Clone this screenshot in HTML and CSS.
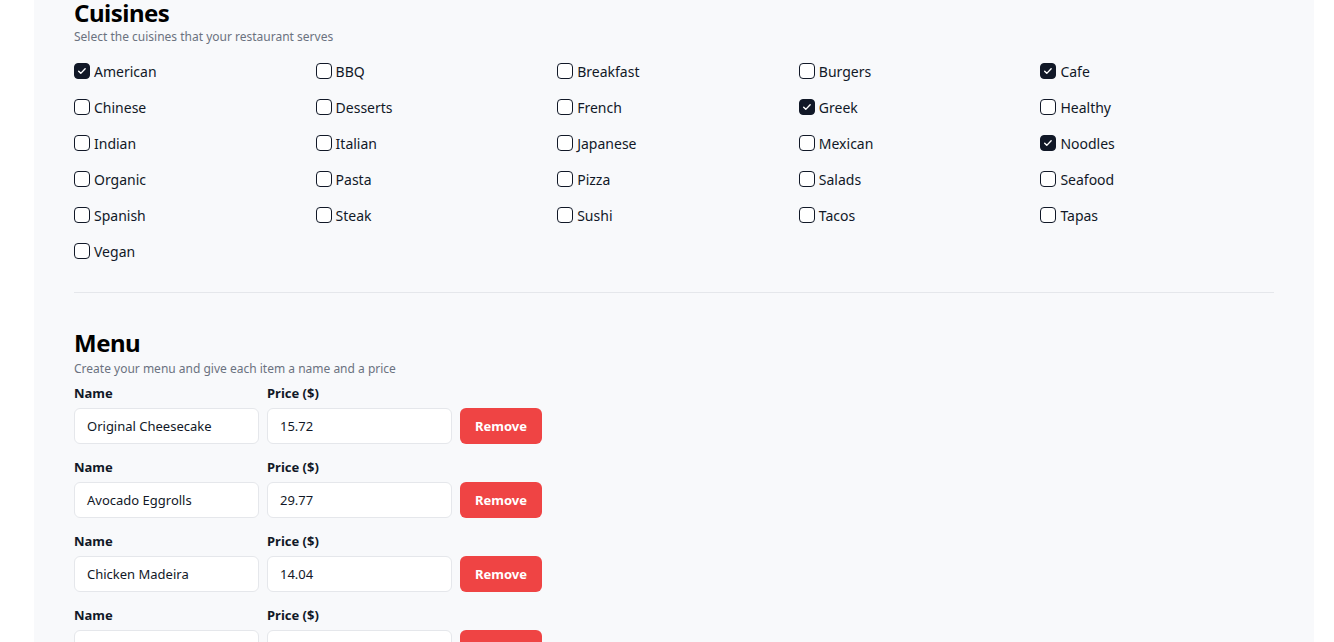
FILE: index.html
```html
<!DOCTYPE html>
<html lang="en">
<head>
<meta charset="utf-8">
<title>Restaurant settings</title>
<link rel="stylesheet" href="styles.css">
</head>
<body>
<main class="panel">
  <section class="section">
    <h2 class="section-title">Cuisines</h2>
    <p class="section-sub">Select the cuisines that your restaurant serves</p>
    <div class="cuisine-grid">
      <label class="check"><span class="box checked"><svg viewBox="0 0 16 16"><path d="M4.2 8.3l2.4 2.4 5-5.2"/></svg></span>American</label>
      <label class="check"><span class="box"></span>BBQ</label>
      <label class="check"><span class="box"></span>Breakfast</label>
      <label class="check"><span class="box"></span>Burgers</label>
      <label class="check"><span class="box checked"><svg viewBox="0 0 16 16"><path d="M4.2 8.3l2.4 2.4 5-5.2"/></svg></span>Cafe</label>
      <label class="check"><span class="box"></span>Chinese</label>
      <label class="check"><span class="box"></span>Desserts</label>
      <label class="check"><span class="box"></span>French</label>
      <label class="check"><span class="box checked"><svg viewBox="0 0 16 16"><path d="M4.2 8.3l2.4 2.4 5-5.2"/></svg></span>Greek</label>
      <label class="check"><span class="box"></span>Healthy</label>
      <label class="check"><span class="box"></span>Indian</label>
      <label class="check"><span class="box"></span>Italian</label>
      <label class="check"><span class="box"></span>Japanese</label>
      <label class="check"><span class="box"></span>Mexican</label>
      <label class="check"><span class="box checked"><svg viewBox="0 0 16 16"><path d="M4.2 8.3l2.4 2.4 5-5.2"/></svg></span>Noodles</label>
      <label class="check"><span class="box"></span>Organic</label>
      <label class="check"><span class="box"></span>Pasta</label>
      <label class="check"><span class="box"></span>Pizza</label>
      <label class="check"><span class="box"></span>Salads</label>
      <label class="check"><span class="box"></span>Seafood</label>
      <label class="check"><span class="box"></span>Spanish</label>
      <label class="check"><span class="box"></span>Steak</label>
      <label class="check"><span class="box"></span>Sushi</label>
      <label class="check"><span class="box"></span>Tacos</label>
      <label class="check"><span class="box"></span>Tapas</label>
      <label class="check"><span class="box"></span>Vegan</label>
    </div>
  </section>
  <hr class="divider">
  <section class="section menu">
    <h2 class="section-title">Menu</h2>
    <p class="section-sub">Create your menu and give each item a name and a price</p>
    <div class="menu-list">
      <div class="menu-row">
        <div class="field"><span class="field-label">Name</span><div class="input">Original Cheesecake</div></div>
        <div class="field"><span class="field-label">Price ($)</span><div class="input">15.72</div></div>
        <button class="remove">Remove</button>
      </div>
      <div class="menu-row">
        <div class="field"><span class="field-label">Name</span><div class="input">Avocado Eggrolls</div></div>
        <div class="field"><span class="field-label">Price ($)</span><div class="input">29.77</div></div>
        <button class="remove">Remove</button>
      </div>
      <div class="menu-row">
        <div class="field"><span class="field-label">Name</span><div class="input">Chicken Madeira</div></div>
        <div class="field"><span class="field-label">Price ($)</span><div class="input">14.04</div></div>
        <button class="remove">Remove</button>
      </div>
      <div class="menu-row">
        <div class="field"><span class="field-label">Name</span><div class="input"></div></div>
        <div class="field"><span class="field-label">Price ($)</span><div class="input"></div></div>
        <button class="remove">Remove</button>
      </div>
    </div>
  </section>
</main>
</body>
</html>
```

FILE: styles.css
```css
html, body {
  margin: 0;
  padding: 0;
  background: #ffffff;
  overflow: hidden;
}
body {
  font-family: "Noto Sans", "Open Sans", sans-serif;
  color: #111827;
}
.panel {
  width: 1200px;
  margin: -3px 0 0 34px;
  padding: 0 40px 40px;
  background: #f8f9fb;
}
.section-title {
  margin: 0;
  font-size: 24px;
  line-height: 32px;
  font-weight: 700;
  letter-spacing: -0.5px;
  color: #000;
}
.section-sub {
  margin: 0;
  font-size: 12px;
  line-height: 16px;
  color: #6b7280;
}
.cuisine-grid {
  margin-top: 16px;
  display: grid;
  grid-template-columns: repeat(5, 1fr);
  column-gap: 8px;
  row-gap: 16px;
}
.check {
  display: flex;
  align-items: center;
  gap: 4px;
  height: 20px;
  font-size: 14px;
  color: #111827;
}
.box {
  width: 16px;
  height: 16px;
  box-sizing: border-box;
  border: 1.5px solid #111827;
  border-radius: 4px;
  background: #fff;
  display: flex;
}
.box.checked {
  background: #111827;
}
.box svg {
  width: 100%;
  height: 100%;
  fill: none;
  stroke: #fff;
  stroke-width: 1.6;
  stroke-linecap: round;
  stroke-linejoin: round;
}
.divider {
  margin: 31px 0 0;
  border: 0;
  border-top: 1px solid #e5e7eb;
}
.menu {
  padding-top: 34px;
}
.menu .section-sub {
  margin-top: 2px;
}
.menu-list {
  margin-top: 6px;
  display: flex;
  flex-direction: column;
  gap: 13px;
}
.menu-row {
  display: flex;
  align-items: flex-end;
  gap: 8px;
}
.field {
  display: flex;
  flex-direction: column;
  gap: 5px;
  width: 185px;
}
.field-label {
  font-size: 13px;
  line-height: 20px;
  font-weight: 700;
  color: #111827;
}
.input {
  height: 36px;
  box-sizing: border-box;
  border: 1px solid #e5e7eb;
  border-radius: 6px;
  background: #fff;
  padding: 0 12px;
  display: flex;
  align-items: center;
  font-size: 13px;
  color: #111827;
}
.remove {
  width: 82px;
  height: 36px;
  border: 0;
  border-radius: 6px;
  background: #ef4444;
  color: #fff;
  font-family: inherit;
  font-size: 13px;
  font-weight: 700;
}
```
